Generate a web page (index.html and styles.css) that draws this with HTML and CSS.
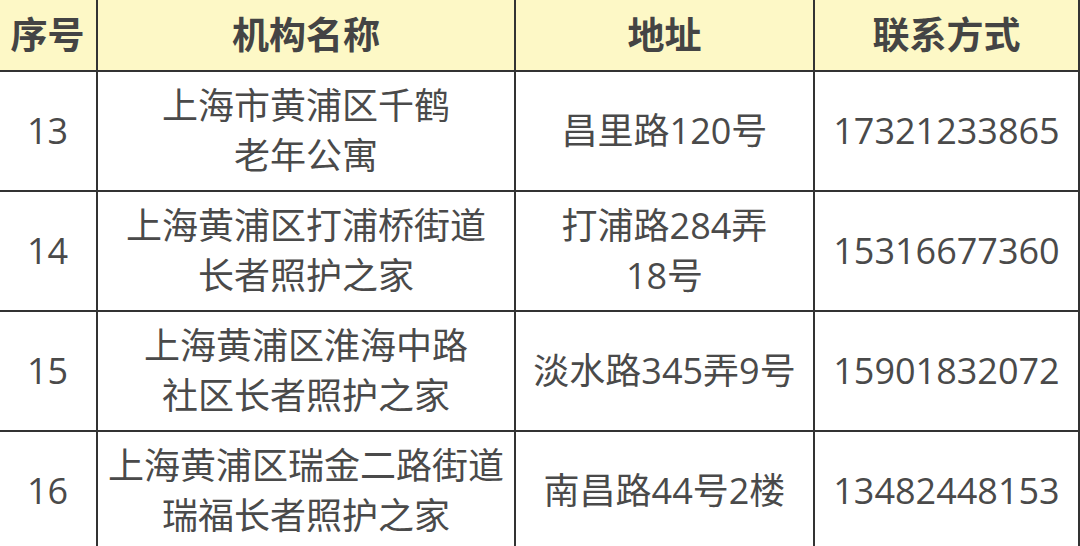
FILE: index.html
```html
<!DOCTYPE html>
<html lang="zh-CN">
<head>
<meta charset="utf-8">
<title>机构列表</title>
<link rel="stylesheet" href="styles.css">
</head>
<body>
<table class="org-table">
  <colgroup>
    <col class="c-no">
    <col class="c-name">
    <col class="c-addr">
    <col class="c-tel">
  </colgroup>
  <thead>
    <tr class="head-row">
      <th>序号</th>
      <th>机构名称</th>
      <th>地址</th>
      <th>联系方式</th>
    </tr>
  </thead>
  <tbody>
    <tr>
      <td>13</td>
      <td>上海市黄浦区千鹤<br>老年公寓</td>
      <td>昌里路120号</td>
      <td>17321233865</td>
    </tr>
    <tr>
      <td>14</td>
      <td>上海黄浦区打浦桥街道<br>长者照护之家</td>
      <td>打浦路284弄<br>18号</td>
      <td>15316677360</td>
    </tr>
    <tr>
      <td>15</td>
      <td>上海黄浦区淮海中路<br>社区长者照护之家</td>
      <td>淡水路345弄9号</td>
      <td>15901832072</td>
    </tr>
    <tr>
      <td>16</td>
      <td>上海黄浦区瑞金二路街道<br>瑞福长者照护之家</td>
      <td>南昌路44号2楼</td>
      <td>13482448153</td>
    </tr>
  </tbody>
</table>
</body>
</html>
```

FILE: styles.css
```css
html, body {
  margin: 0;
  padding: 0;
  background: #ffffff;
  overflow: hidden;
}

body {
  font-family: "Open Sans", "Noto Sans CJK SC", sans-serif;
  color: #4a4a4a;
}

.org-table {
  border-collapse: collapse;
  table-layout: fixed;
  width: 1081px;
  margin-left: -3px;
  margin-top: -2px;
}

.c-no { width: 99px; }
.c-name { width: 418px; }
.c-addr { width: 299px; }
.c-tel { width: 265px; }

.org-table th,
.org-table td {
  border: 2px solid #333333;
  text-align: center;
  vertical-align: middle;
  padding: 0;
  font-size: 36px;
  line-height: 50px;
  white-space: nowrap;
}

.head-row th {
  background: #fdf8c6;
  height: 70px;
  font-size: 37px;
  font-weight: 700;
  color: #444444;
}

.org-table tbody td {
  height: 118px;
}
```
